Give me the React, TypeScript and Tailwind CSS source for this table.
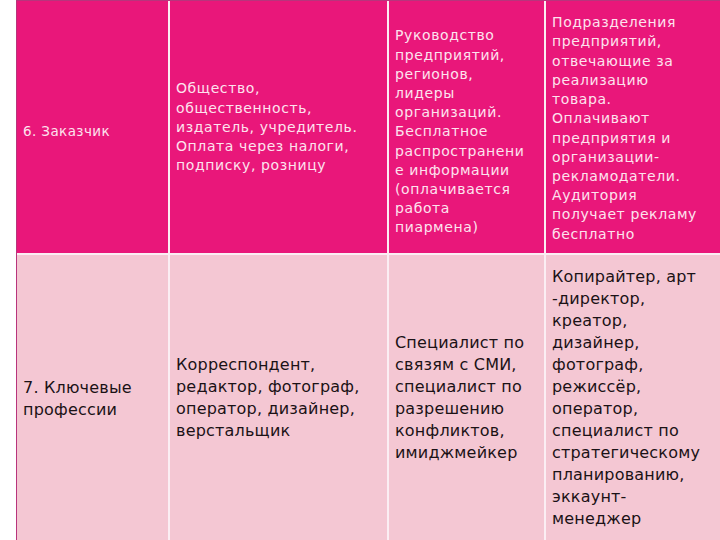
import React from 'react';

// Two rows of a slide table: "customer" and "key professions"
type Cell = string[];

const ROW_TOP: Cell[] = [
  ['6. Заказчик'],
  ['Общество,', 'общественность,', 'издатель, учредитель.', 'Оплата через налоги,', 'подписку, розницу'],
  [
    'Руководство',
    'предприятий,',
    'регионов,',
    'лидеры',
    'организаций.',
    'Бесплатное',
    'распространени',
    'е информации',
    '(оплачивается',
    'работа',
    'пиармена)',
  ],
  [
    'Подразделения',
    'предприятий,',
    'отвечающие за',
    'реализацию',
    'товара.',
    'Оплачивают',
    'предприятия и',
    'организации-',
    'рекламодатели.',
    'Аудитория',
    'получает рекламу',
    'бесплатно',
  ],
];

const ROW_BOTTOM: Cell[] = [
  ['7. Ключевые', 'профессии'],
  ['Корреспондент,', 'редактор, фотограф,', 'оператор, дизайнер,', 'верстальщик'],
  ['Специалист по', 'связям с СМИ,', 'специалист по', 'разрешению', 'конфликтов,', 'имиджмейкер'],
  [
    'Копирайтер, арт',
    '-директор,',
    'креатор,',
    'дизайнер,',
    'фотограф,',
    'режиссёр,',
    'оператор,',
    'специалист по',
    'стратегическому',
    'планированию,',
    'эккаунт-',
    'менеджер',
  ],
];

const TOP_SHIFT = ['pt-[9px]', 'pt-[1px]', 'pt-[10px]', 'pt-[3px]'];

function Lines({ lines }: { lines: string[] }) {
  return (
    <>
      {lines.map((l, i) => (
        <span key={i} className="block whitespace-nowrap">
          {l}
        </span>
      ))}
    </>
  );
}

export default function App() {
  return (
    <div
      className="w-[720px] h-[540px] overflow-hidden bg-white pl-[16px]"
      style={{ fontFamily: '"DejaVu Sans", Verdana, sans-serif' }}
    >
      <div className="grid h-full grid-cols-[151px_217px_155px_1fr] grid-rows-[252px_1fr] gap-[2px] border-l border-t border-[#b8347c] bg-[#fbeef3]">
        {ROW_TOP.map((cell, i) => (
          <div
            key={`t${i}`}
            className={`flex items-center bg-[#e9177a] px-[6px] text-[14px] leading-[19.2px] tracking-[0.6px] text-[#fde3ee] ${TOP_SHIFT[i]}`}
          >
            <div className={i === 0 ? 'text-[13.5px] tracking-[0.4px]' : ''}>
              <Lines lines={cell} />
            </div>
          </div>
        ))}
        {ROW_BOTTOM.map((cell, i) => (
          <div
            key={`b${i}`}
            className={`flex items-center bg-[#f4c7d3] px-[6px] text-[16px] leading-[22px] tracking-[0.2px] text-[#1b1216] ${i === 0 ? 'pt-[2px]' : ''}`}
          >
            <div>
              <Lines lines={cell} />
            </div>
          </div>
        ))}
      </div>
    </div>
  );
}
